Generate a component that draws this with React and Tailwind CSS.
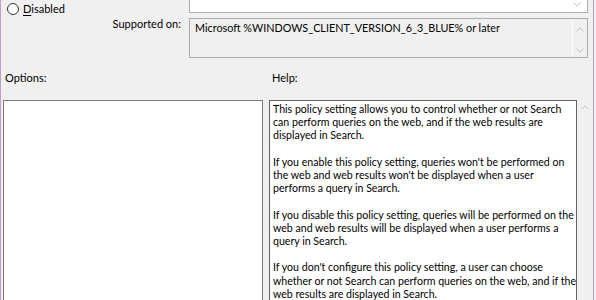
import React from "react";

const Chevron = ({ up, className }) => (
  <svg width="8" height="5" viewBox="0 0 8 5" className={className}>
    <polyline
      points={up ? "0.5,4.5 4,1 7.5,4.5" : "0.5,0.5 4,4 7.5,0.5"}
      fill="none"
      stroke="#c2c2c2"
      strokeWidth="1"
    />
  </svg>
);

const helpLines = [
  ["This policy setting allows you to control whether or not Search", "can perform queries on the web, and if the web results are", "displayed in Search."],
  ["If you enable this policy setting, queries won't be performed on", "the web and web results won't be displayed when a user", "performs a query in Search."],
  ["If you disable this policy setting, queries will be performed on the", "web and web results will be displayed when a user performs a", "query in Search."],
  ["If you don't configure this policy setting, a user can choose", "whether or not Search can perform queries on the web, and if the", "web results are displayed in Search."],
];

export default function App() {
  return (
    <div
      className="w-[596px] h-[300px] bg-[#f0f0f0] flex overflow-hidden text-black text-[11px] leading-[13.2px]"
      style={{ fontFamily: "Lato, 'Noto Sans', sans-serif" }}
    >
      <div className="w-[1px] h-full bg-[#b9a1cf] shrink-0" />
      <div className="w-[592px] shrink-0 flex flex-col">
        {/* top section */}
        <div className="flex h-[58px] shrink-0">
          <div className="w-[188px] shrink-0 flex flex-col">
            <div className="flex items-center h-[16px] pl-[6px] pt-[1px]">
              <div className="w-[12px] h-[12px] rounded-full border border-[#333333] bg-white shrink-0" />
              <span className="ml-[4px] whitespace-nowrap">
                <span className="underline underline-offset-2">D</span>isabled
              </span>
            </div>
            <div className="mt-[1px] pr-[8px] text-right whitespace-nowrap">Supported on:</div>
          </div>
          <div className="w-[399px] shrink-0 flex flex-col">
            <div className="h-[13px] border-x border-b border-[#adadad] bg-white flex justify-end items-start pr-[6px] pt-[2px]">
              <Chevron />
            </div>
            <div className="mt-[5px] h-[40px] border border-[#adadad] bg-[#f0f0f0] flex">
              <div className="flex-1 pl-[5px] pt-[2px] whitespace-nowrap text-[10.8px]">
                Microsoft %WINDOWS_CLIENT_VERSION_6_3_BLUE% or later
              </div>
              <div className="w-[15px] border-l border-[#fbfbfb] flex flex-col items-center justify-between pt-[8px] pb-[4px]">
                <Chevron up />
                <Chevron />
              </div>
            </div>
          </div>
        </div>
        {/* labels */}
        <div className="flex mt-[13px] h-[13px] shrink-0">
          <div className="w-[267px] pl-[4px]">Options:</div>
          <div className="pl-[4px]">Help:</div>
        </div>
        {/* boxes */}
        <div className="flex mt-[16px] flex-1 min-h-0">
          <div className="ml-[2px] w-[260px] border border-[#7a7a7a] border-b-0 bg-white shrink-0" />
          <div className="ml-[6px] w-[308px] border border-[#646464] border-b-0 bg-white shrink-0 pl-[3px] pt-[2px] whitespace-nowrap text-[10.6px]">
            {helpLines.map((p, i) => (
              <React.Fragment key={i}>
                {i > 0 && <div className="h-[13.2px]" />}
                {p.map((l, j) => (
                  <div key={j}>{l}</div>
                ))}
              </React.Fragment>
            ))}
          </div>
          <div className="w-[16px] shrink-0 flex justify-center pt-[5px]">
            <Chevron up />
          </div>
        </div>
      </div>
      <div className="w-[1px] h-full bg-[#b9a1cf] shrink-0" />
    </div>
  );
}
